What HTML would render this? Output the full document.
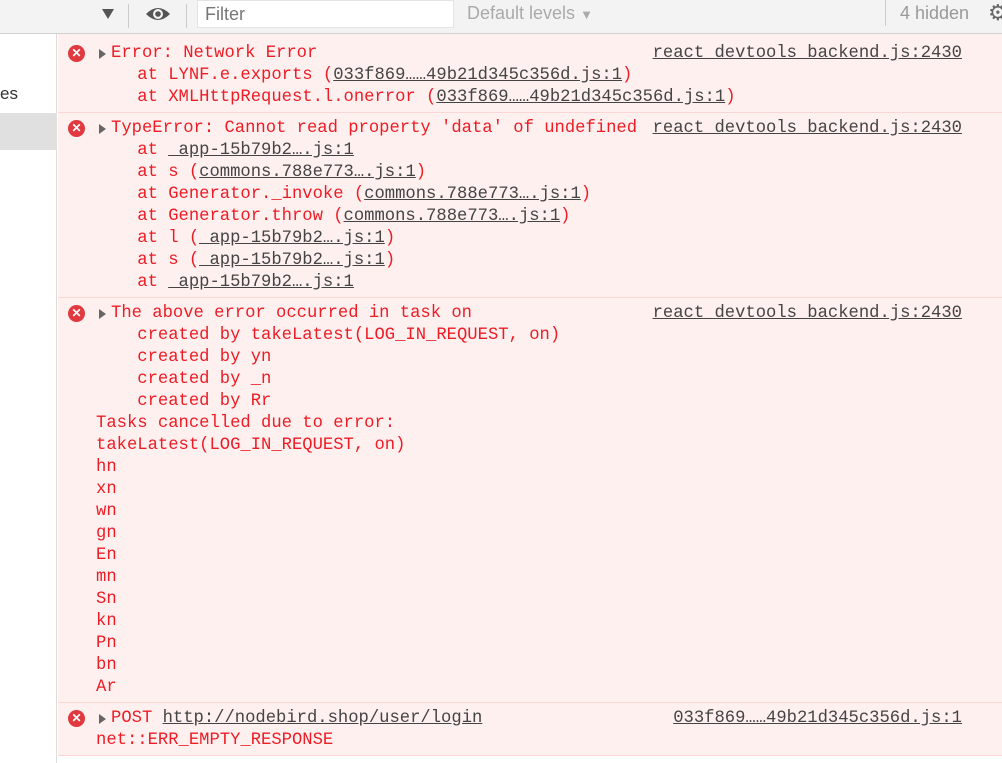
<!DOCTYPE html>
<html><head><meta charset="utf-8"><style>
*{margin:0;padding:0;box-sizing:border-box}
body{width:1002px;height:763px;overflow:hidden;background:#fff;font-family:"Liberation Sans",sans-serif;position:relative}
.tb{position:absolute;left:0;top:0;width:1002px;height:34px;background:#f3f3f3;border-bottom:1px solid #d0d0d0}
.side{position:absolute;left:0;top:34px;width:57px;height:729px;background:#fff;border-right:1px solid #ddd}
.sel{position:absolute;left:0;top:79px;width:57px;height:37px;background:#e0e0e0}
.es{position:absolute;left:0;top:50px;font-size:17px;color:#333}
.con{position:absolute;left:58px;top:34px;width:944px;background:#fff0f0;padding-top:4px}
.e{background:#fff0f0;border-bottom:1px solid #fad6d6;padding:5px 0 3px 0;position:relative;font-family:"Liberation Mono",monospace;font-size:17.2px;line-height:22px;color:#ee1c25;white-space:pre}
.e .ic{position:absolute;left:10px;top:7px;width:17px;height:17px;border-radius:50%;background:#e0393f;color:#fff;font:bold 12px/17px "Liberation Sans",sans-serif;text-align:center}
.e .tri{position:absolute;left:41px;width:0;height:0;border-left:7px solid #666;border-top:5px solid transparent;border-bottom:5px solid transparent}
.e .m{padding-left:38px}
u{color:#444;text-decoration:underline;text-decoration-color:#444}
.r{position:absolute;right:40px;color:#444;text-decoration:underline}
</style></head><body>
<div class="tb">
 <div style="position:absolute;left:102px;top:9px;border-top:10px solid #555;border-left:6px solid transparent;border-right:6px solid transparent"></div>
 <div style="position:absolute;left:128px;top:4px;width:1px;height:24px;background:#ccc"></div>
 <svg style="position:absolute;left:144px;top:3px" width="28" height="22" viewBox="0 0 28 22"><path d="M2 11 Q14 -1 26 11 Q14 23 2 11Z" fill="#555"/><circle cx="14" cy="11" r="5" fill="#f3f3f3"/><circle cx="14" cy="11" r="2.8" fill="#555"/></svg>
 <div style="position:absolute;left:186px;top:4px;width:1px;height:24px;background:#ccc"></div>
 <div style="position:absolute;left:197px;top:0;width:257px;height:28px;background:#fff;border:1px solid #e4e4e4;font-size:18px;color:#777;padding:3px 7px">Filter</div>
 <div style="position:absolute;left:467px;top:3px;font-size:18px;color:#aaa">Default levels <span style="font-size:13px">▼</span></div>
 <div style="position:absolute;left:885px;top:0;width:1px;height:26px;background:#ccc"></div>
 <div style="position:absolute;left:900px;top:3px;font-size:18px;color:#999">4 hidden</div>
 <div style="position:absolute;left:988px;top:0px;font-size:22px;color:#666">⚙</div>
</div>
<div class="side"><div class="sel"></div><div class="es">es</div></div>
<div class="con">
<div class="e"><div class="ic">✕</div><div class="tri" style="top:11px"></div><span class="r">react_devtools_backend.js:2430</span><div class="m"><span style="padding-left:15px"></span>Error: Network Error</div><div class="m">    at LYNF.e.exports (<u>033f869……49b21d345c356d.js:1</u>)</div><div class="m">    at XMLHttpRequest.l.onerror (<u>033f869……49b21d345c356d.js:1</u>)</div></div>
<div class="e"><div class="ic">✕</div><div class="tri" style="top:11px"></div><span class="r">react_devtools_backend.js:2430</span><div class="m"><span style="padding-left:15px"></span>TypeError: Cannot read property 'data' of undefined</div><div class="m">    at <u>_app-15b79b2….js:1</u></div><div class="m">    at s (<u>commons.788e773….js:1</u>)</div><div class="m">    at Generator._invoke (<u>commons.788e773….js:1</u>)</div><div class="m">    at Generator.throw (<u>commons.788e773….js:1</u>)</div><div class="m">    at l (<u>_app-15b79b2….js:1</u>)</div><div class="m">    at s (<u>_app-15b79b2….js:1</u>)</div><div class="m">    at <u>_app-15b79b2….js:1</u></div></div>
<div class="e"><div class="ic">✕</div><div class="tri" style="top:11px"></div><span class="r">react_devtools_backend.js:2430</span><div class="m"><span style="padding-left:15px"></span>The above error occurred in task on</div><div class="m">    created by takeLatest(LOG_IN_REQUEST, on)</div><div class="m">    created by yn</div><div class="m">    created by _n</div><div class="m">    created by Rr</div><div class="m">Tasks cancelled due to error:</div><div class="m">takeLatest(LOG_IN_REQUEST, on)</div><div class="m">hn</div><div class="m">xn</div><div class="m">wn</div><div class="m">gn</div><div class="m">En</div><div class="m">mn</div><div class="m">Sn</div><div class="m">kn</div><div class="m">Pn</div><div class="m">bn</div><div class="m">Ar</div></div>
<div class="e"><div class="ic">✕</div><div class="tri" style="top:11px"></div><span class="r">033f869……49b21d345c356d.js:1</span><div class="m"><span style="padding-left:15px"></span>POST <u>http://nodebird.shop/user/login</u></div><div class="m">net::ERR_EMPTY_RESPONSE</div></div>
</div>
</body></html>
